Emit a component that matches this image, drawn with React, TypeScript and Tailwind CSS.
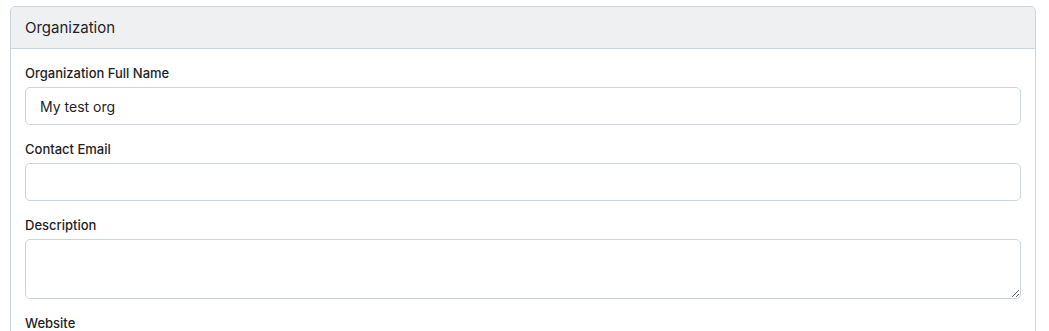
const fieldCls =
  'block w-full rounded-[5px] border border-[#cdd5dc] bg-white px-[14px] text-[14px] text-[#1f2328] outline-none';

function Label({ children }: { children: string }) {
  return <label className="block h-[20px] mb-[4px] text-[13px] leading-[20px] font-medium text-[#1f2328]">{children}</label>;
}

export default function App() {
  return (
    <div className="min-h-[331px] bg-white pt-[6px] pl-[10px] font-['Inter',sans-serif]">
      <div className="w-[1026px] rounded-[5px] border border-[#cdd5dc] bg-white overflow-hidden">
        <div className="h-[42px] flex items-center px-[14px] pt-[2px] bg-[#eff0f2] border-b border-[#cdd5dc] text-[15px] text-[#1f2328]">
          Organization
        </div>
        <div className="px-[14px] pt-[14px]">
          <div className="mb-[14px]">
            <Label>Organization Full Name</Label>
            <input className={`${fieldCls} h-[38px]`} defaultValue="My test org" />
          </div>
          <div className="mb-[14px]">
            <Label>Contact Email</Label>
            <input className={`${fieldCls} h-[38px]`} />
          </div>
          <div className="mb-[14px]">
            <Label>Description</Label>
            <textarea className={`${fieldCls} h-[60px] py-[8px] align-top`} />
          </div>
          <div className="mb-[14px]">
            <Label>Website</Label>
            <input className={`${fieldCls} h-[38px]`} />
          </div>
        </div>
      </div>
    </div>
  );
}
